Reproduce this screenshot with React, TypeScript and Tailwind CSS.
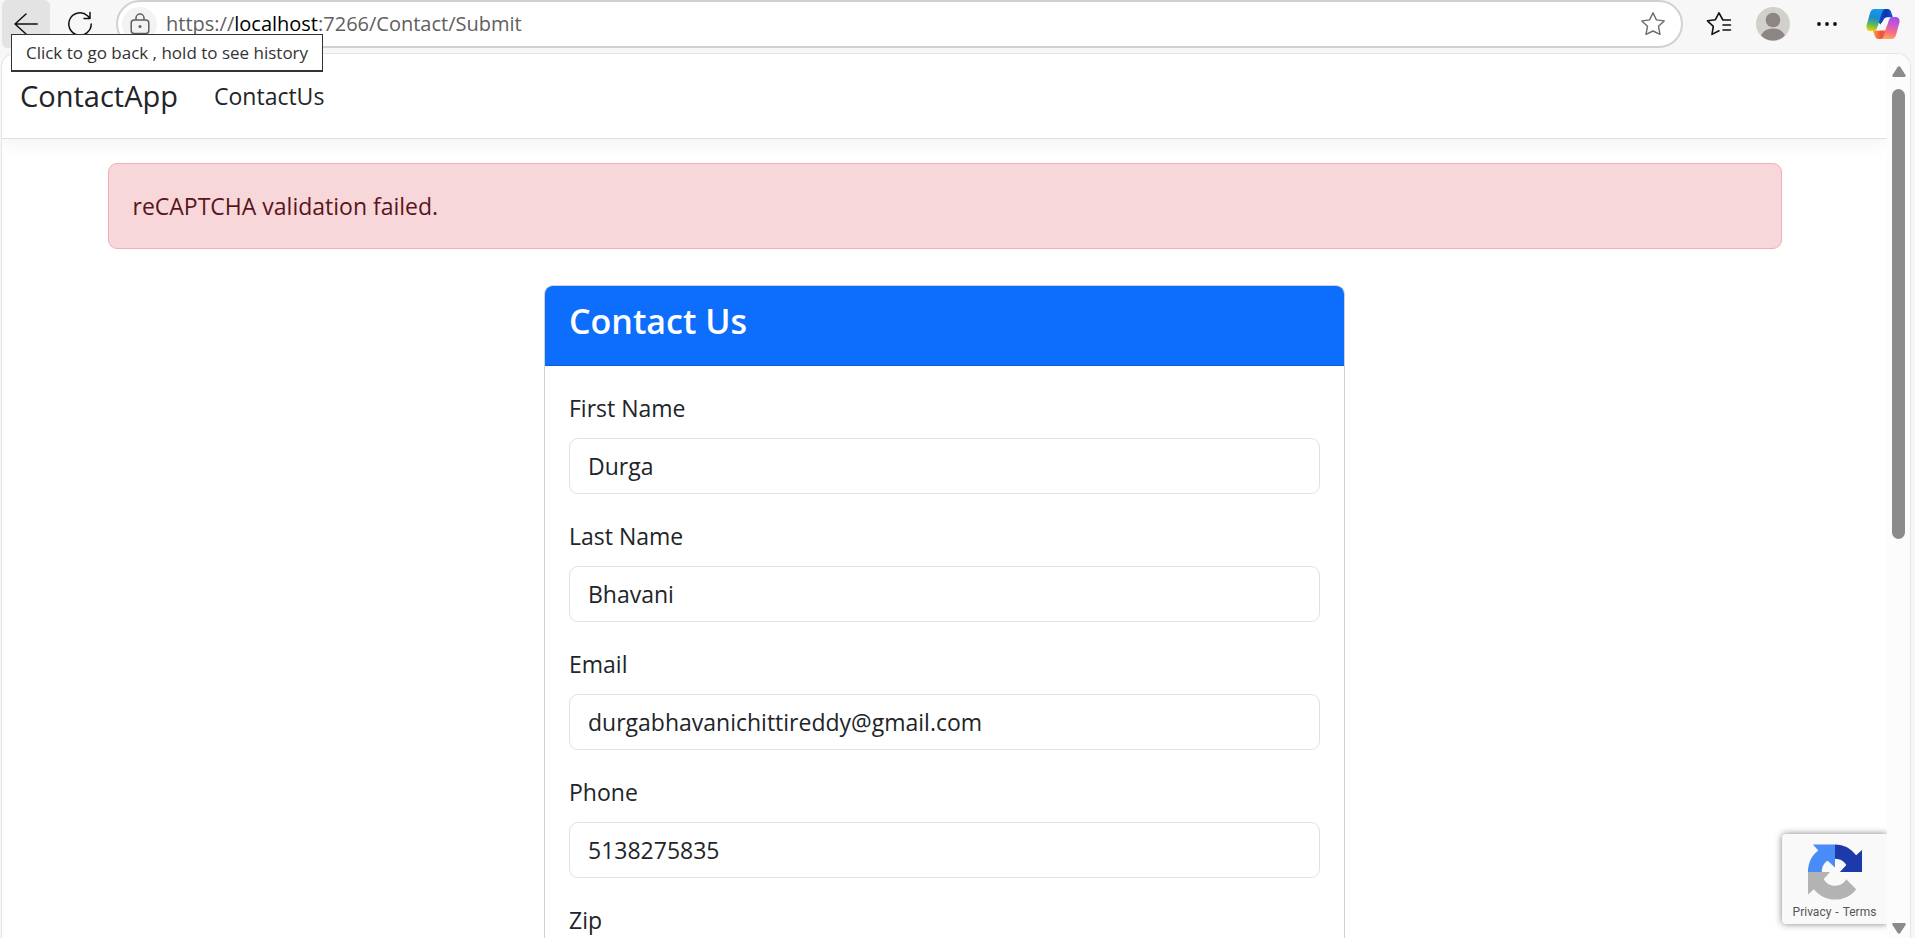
import type { ReactNode } from "react";

type FieldProps = { id: string; label: string; type?: string; value?: string };

function Field({ id, label, type = "text", value = "" }: FieldProps) {
  return (
    <div className="mb-6">
      <label htmlFor={id} className="mb-3 block h-9 leading-9">
        {label}
      </label>
      <input
        id={id}
        name={id}
        type={type}
        defaultValue={value}
        className="block h-14 w-full rounded-[9px] border border-[#dee2e6] bg-white px-[18px] text-[#212529] outline-none"
      />
    </div>
  );
}

function ToolButton({ label, className = "", children }: { label: string; className?: string; children: ReactNode }) {
  return (
    <button type="button" aria-label={label} className={`flex h-12 shrink-0 items-center justify-center ${className}`}>
      {children}
    </button>
  );
}

function BackIcon() {
  return (
    <svg width="24" height="24" viewBox="0 0 24 24" fill="none" stroke="#111" strokeWidth="1.5" strokeLinecap="round" strokeLinejoin="round">
      <path d="M23.200 12H1M12 2 1 12 12 22" />
    </svg>
  );
}

function ReloadIcon() {
  return (
    <svg width="26" height="26" viewBox="0 0 26 26" fill="none" stroke="#111" strokeWidth="1.5" strokeLinecap="round" strokeLinejoin="round">
      <path d="M24.200 13A11.200 11.200 0 1 1 20.500 4.700L23 7.300M23 1.500v6h-6" />
    </svg>
  );
}

function LockIcon() {
  return (
    <svg width="20" height="22" viewBox="0 0 20 22" fill="none" stroke="#5f5f5f" strokeWidth="1.5">
      <rect x="1.200" y="7" width="17.600" height="13.500" rx="3" />
      <path d="M6 7V5a4 4 0 0 1 8 0v2" />
      <circle cx="10" cy="13.500" r="1.500" fill="#5f5f5f" stroke="none" />
    </svg>
  );
}

function StarIcon() {
  return (
    <svg width="26" height="26" viewBox="0 0 26 26" fill="none" stroke="#6b6b6b" strokeWidth="1.4" strokeLinejoin="round">
      <path d="M13 1.8l3.400 7.100 7.800 1-5.700 5.400 1.500 8.100-7-3.400-7 3.400 1.500-8.100L1.800 9.900l7.800-1z" />
    </svg>
  );
}

function FavoritesIcon() {
  return (
    <svg width="26" height="26" viewBox="0 0 26 26" fill="none" stroke="#111" strokeWidth="1.6" strokeLinecap="round" strokeLinejoin="round">
      <path d="M24.400 9h-7.500L13 1.800 9.400 8.700l-7.900 1.100 5.800 5.500L6 23.400l7-3.600M17 14h7.500M17 19h7.500" />
    </svg>
  );
}

function ProfileIcon() {
  return (
    <svg width="34" height="34" viewBox="0 0 34 34">
      <defs>
        <clipPath id="avatar">
          <circle cx="17" cy="17" r="16.500" />
        </clipPath>
      </defs>
      <circle cx="17" cy="17" r="17" fill="#d2d0cb" />
      <circle cx="17" cy="13" r="7.300" fill="#8b8683" />
      <path clipPath="url(#avatar)" d="M4 33C5 25 10 21.500 17 21.500S29 25 30 33V34H4z" fill="#8b8683" />
    </svg>
  );
}

function CopilotIcon() {
  return (
    <svg width="34" height="32" viewBox="0 0 34 32">
      <defs>
        <linearGradient id="cpLeft" x1=".5" y1="0" x2=".3" y2="1">
          <stop offset="0" stopColor="#129cf0" />
          <stop offset=".4" stopColor="#1f88cf" />
          <stop offset=".7" stopColor="#55b860" />
          <stop offset="1" stopColor="#f4d000" />
        </linearGradient>
        <linearGradient id="cpRight" x1=".6" y1="0" x2=".4" y2="1">
          <stop offset="0" stopColor="#a04df0" />
          <stop offset=".4" stopColor="#d45cc0" />
          <stop offset=".7" stopColor="#fb7080" />
          <stop offset="1" stopColor="#ffa75c" />
        </linearGradient>
        <linearGradient id="cpTop" x1="0" y1="0" x2="1" y2="0">
          <stop offset="0" stopColor="#1450c8" />
          <stop offset=".6" stopColor="#0a35b0" />
          <stop offset="1" stopColor="#2458d8" />
        </linearGradient>
        <linearGradient id="cpBottom" x1="0" y1="0" x2="1" y2="0">
          <stop offset="0" stopColor="#f9a03a" />
          <stop offset=".5" stopColor="#f0503c" />
          <stop offset="1" stopColor="#f0704c" />
        </linearGradient>
      </defs>
      <path d="M14 1h7.500c2 0 3 1 3.600 3L27 9.500h-4.500c-2.600 0-4.300.500-5.200 3l-3 4L11 12z" fill="url(#cpTop)" />
      <path d="M20 31h-7.500c-2 0-3-1-3.600-3L7 22.500h4.500c2.600 0 4.300-.500 5.200-3l3-4L23 20z" fill="url(#cpBottom)" />
      <path d="M8.500 1H20c-2.200 0-3.400 1.500-4.200 4l-4.300 14c-.8 2.500-2 4-4.300 4H4.500C1 23-.2 20 .7 17L4 5c.8-2.800 2.200-4 4.500-4z" fill="url(#cpLeft)" />
      <path d="M25.500 31H14c2.200 0 3.400-1.500 4.200-4l4.300-14c.8-2.500 2-4 4.300-4h2.700c3.500 0 4.700 3 3.800 6L30 27c-.8 2.800-2.200 4-4.500 4z" fill="url(#cpRight)" />
      <path d="M17.300 12.500c.9-2.500 2.200-3 4.700-3h2.500c-1.200.8-1.700 2-2.200 3.500L19.300 22.500H11l-.6-.8c.6-.7.900-1.500 1.200-2.700h1.600c1.300 0 2-.8 2.400-2z" fill="#f7f7f7" />
    </svg>
  );
}

function RecaptchaLogo() {
  return (
    <svg width="56" height="57" viewBox="0 0 56 57">
      <path d="M28 .5C37 .5 44.500 4.600 49.500 11.500L55.500 6v22.500H33l6.500-7C37.500 17.500 33.500 15.200 28 15z" fill="#1c3aa9" />
      <path d="M28 .5H5.500l5.500 6C4 11.500 .5 19.500.5 28.500H14.500c.2-5 2-9.500 6-11.500L28 24z" fill="#4a8cf7" />
      <path d="M.5 28.500H23l-6.500 7c2 4 6.500 7 11.500 7 5.500 0 9-2.500 11.500-6.500L49.500 46C44.500 53 37 56.500 28 56.500 19 56.500 11.500 52.500 6.500 46L.5 51.500z" fill="#b3b3b3" />
    </svg>
  );
}

function BrowserToolbar() {
  return (
    <header className="flex h-[53px] shrink-0 items-start pl-[2px] pr-[14px]">
      <ToolButton label="Back" className="w-12 rounded-md bg-[#e3e3e3]">
        <BackIcon />
      </ToolButton>
      <ToolButton label="Refresh" className="ml-[6px] w-12">
        <ReloadIcon />
      </ToolButton>
      <div className="ml-3 flex h-12 grow items-center rounded-full border-2 border-[#d1d1d1] bg-white px-1">
        <button type="button" aria-label="View site information" className="flex size-[35px] shrink-0 items-center justify-center rounded-full bg-[#f3f3f3]">
          <LockIcon />
        </button>
        <div role="textbox" aria-label="Address" tabIndex={0} className="ml-[9px] grow text-xl leading-6 text-[#606060]">
          https://<span className="text-black">localhost</span>:7266/Contact/Submit
        </div>
        <button type="button" aria-label="Add this page to favorites" className="mr-2 flex size-8 items-center justify-center">
          <StarIcon />
        </button>
      </div>
      <ToolButton label="Favorites" className="ml-[18px] w-9">
        <FavoritesIcon />
      </ToolButton>
      <ToolButton label="Profile" className="ml-[18px] w-9">
        <ProfileIcon />
      </ToolButton>
      <ToolButton label="Settings and more" className="ml-[18px] w-9">
        <svg width="20" height="4" viewBox="0 0 20 4" fill="#111">
          <circle cx="2" cy="2" r="1.900" />
          <circle cx="10" cy="2" r="1.900" />
          <circle cx="18" cy="2" r="1.900" />
        </svg>
      </ToolButton>
      <ToolButton label="Copilot" className="ml-5 w-9">
        <CopilotIcon />
      </ToolButton>
    </header>
  );
}

function Scrollbar() {
  return (
    <div aria-hidden="true" className="flex w-[23px] shrink-0 flex-col items-center bg-[#fcfcfc] pb-1 pt-3">
      <svg width="14" height="12" viewBox="0 0 14 12" fill="#8b8b8b">
        <path d="M5.500 1.200a2 2 0 0 1 3 0l5 7.800c.6 1.200 0 2-1.200 2H1.700C.5 11-.1 10.200.5 9z" />
      </svg>
      <div className="mt-[11px] h-[450px] w-[13px] rounded-full bg-[#8b8b8b]" />
      <svg className="mt-auto" width="14" height="12" viewBox="0 0 14 12" fill="#8b8b8b">
        <path d="M5.500 10.800a2 2 0 0 0 3 0l5-7.800c.6-1.200 0-2-1.200-2H1.700C.5 1-.1 1.800.5 3z" />
      </svg>
    </div>
  );
}

function RecaptchaBadge() {
  return (
    <div className="absolute bottom-[14px] right-0 flex h-[90px] w-[105px] flex-col items-center rounded-l-[4px] bg-[#f9f9f9] pt-[10px] shadow-[0_0_7px_rgba(0,0,0,0.5)]">
      <RecaptchaLogo />
      <div className="flex gap-1 font-['Roboto',sans-serif] text-xs leading-6 text-[#555]">
        <a href="#privacy">Privacy</a>
        <span>-</span>
        <a href="#terms">Terms</a>
      </div>
    </div>
  );
}

export default function App() {
  return (
    <div className="relative flex h-screen flex-col overflow-hidden bg-[#f7f7f7] font-['Open_Sans','Noto_Sans',sans-serif]">
      <BrowserToolbar />
      <div role="tooltip" className="absolute left-[11px] top-[34px] flex h-[38px] w-[312px] items-center justify-center border border-b-2 border-[#333] bg-white text-[17px] text-[#333]">
        Click to go back , hold to see history
      </div>
      <div className="ml-px mr-1 flex min-h-0 grow overflow-hidden rounded-t-[14px] border border-b-0 border-[#e4e4e4] bg-white">
        <div className="relative min-w-0 grow overflow-hidden text-[23px] text-[#212529]">
          <nav className="flex h-[85px] items-center gap-9 border-b border-[#dee2e6] px-[18px] shadow-[0_6px_18px_rgba(0,0,0,0.05)]">
            <a href="#home" className="text-[29px]">
              ContactApp
            </a>
            <a href="#contact">ContactUs</a>
          </nav>
          <main className="mx-auto mt-6 max-w-[1710px] px-[18px]">
            <div role="alert" className="flex h-[86px] items-center rounded-[9px] border border-[#f1aeb5] bg-[#f8d7da] px-6 text-[#58151c]">
              reCAPTCHA validation failed.
            </div>
            <section className="mx-auto mt-9 max-w-[801px] rounded-[9px] border border-[#d0d0d0]">
              <div className="h-20 rounded-t-lg border-b border-[#0b5ed7] bg-[#0d6efd] px-6 pt-3 text-white">
                <h1 className="text-[34px] font-semibold leading-[46px]">Contact Us</h1>
              </div>
              <form className="p-6" onSubmit={(e) => e.preventDefault()}>
                <Field id="firstName" label="First Name" value="Durga" />
                <Field id="lastName" label="Last Name" value="Bhavani" />
                <Field id="email" label="Email" type="email" value="durgabhavanichittireddy@gmail.com" />
                <Field id="phone" label="Phone" type="tel" value="5138275835" />
                <Field id="zip" label="Zip" />
              </form>
            </section>
          </main>
          <RecaptchaBadge />
        </div>
        <Scrollbar />
      </div>
    </div>
  );
}
